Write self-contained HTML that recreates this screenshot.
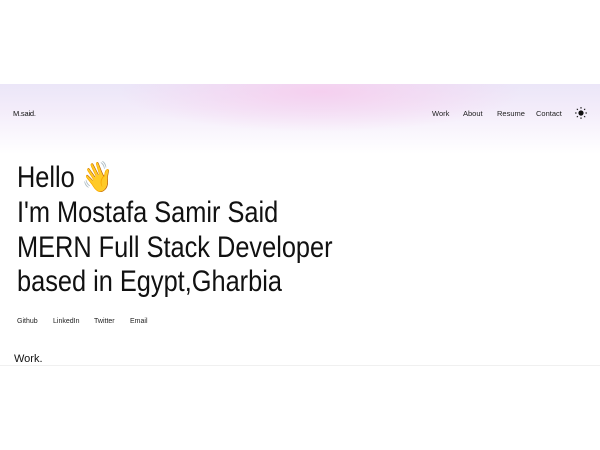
<!DOCTYPE html>
<html><head><meta charset="utf-8"><style>
html,body{margin:0;padding:0;width:600px;height:450px;background:#fff;overflow:hidden;font-family:"Liberation Sans",sans-serif;color:#111}
.band{position:absolute;left:0;top:84px;width:600px;height:70px;
background:radial-gradient(ellipse 200px 40px at 320px 8px,rgba(246,205,238,.9),rgba(246,205,238,0) 100%),linear-gradient(#ebe6f8 0%,#f3ecfa 35%,#fff 100%);}
.logo{position:absolute;left:13px;top:109px;font-size:7.5px;letter-spacing:-.2px}
.nav{position:absolute;top:109px;font-size:7.5px;color:#222}
.h{position:absolute;left:17px;font-size:30px;line-height:35px;white-space:nowrap;transform-origin:left top;transform:scaleX(.845);color:#111}
.soc{position:absolute;top:318px;font-size:7px;color:#222}
</style></head><body>
<div class="band"></div>
<div class="logo">M.said.</div>
<div class="nav" style="left:432px">Work</div>
<div class="nav" style="left:463px">About</div>
<div class="nav" style="left:497px">Resume</div>
<div class="nav" style="left:536px">Contact</div>
<svg style="position:absolute;left:575px;top:107px" width="12" height="12" viewBox="0 0 12 12"><circle cx="6" cy="6" r="2.6" fill="#111"/><g stroke="#111" stroke-width="1"><line x1="6" y1="0" x2="6" y2="1.6"/><line x1="6" y1="10.4" x2="6" y2="12"/><line x1="0" y1="6" x2="1.6" y2="6"/><line x1="10.4" y1="6" x2="12" y2="6"/><line x1="1.8" y1="1.8" x2="2.9" y2="2.9"/><line x1="9.1" y1="9.1" x2="10.2" y2="10.2"/><line x1="1.8" y1="10.2" x2="2.9" y2="9.1"/><line x1="9.1" y1="2.9" x2="10.2" y2="1.8"/></g></svg>
<div class="h" style="top:160px">Hello <span style="font-family:'Noto Color Emoji',sans-serif">👋</span></div>
<div class="h" style="top:195px">I'm Mostafa Samir Said</div>
<div class="h" style="top:230px">MERN Full Stack Developer</div>
<div class="h" style="top:264px">based in Egypt,Gharbia</div>
<div class="soc" style="left:17px">Github</div>
<div class="soc" style="left:53px">LinkedIn</div>
<div class="soc" style="left:94px">Twitter</div>
<div class="soc" style="left:130px">Email</div>
<div style="position:absolute;left:14px;top:353px;font-size:11px">Work.</div>
<div style="position:absolute;left:0;top:365px;width:600px;height:1px;background:#f0f0f0"></div>
</body></html>
